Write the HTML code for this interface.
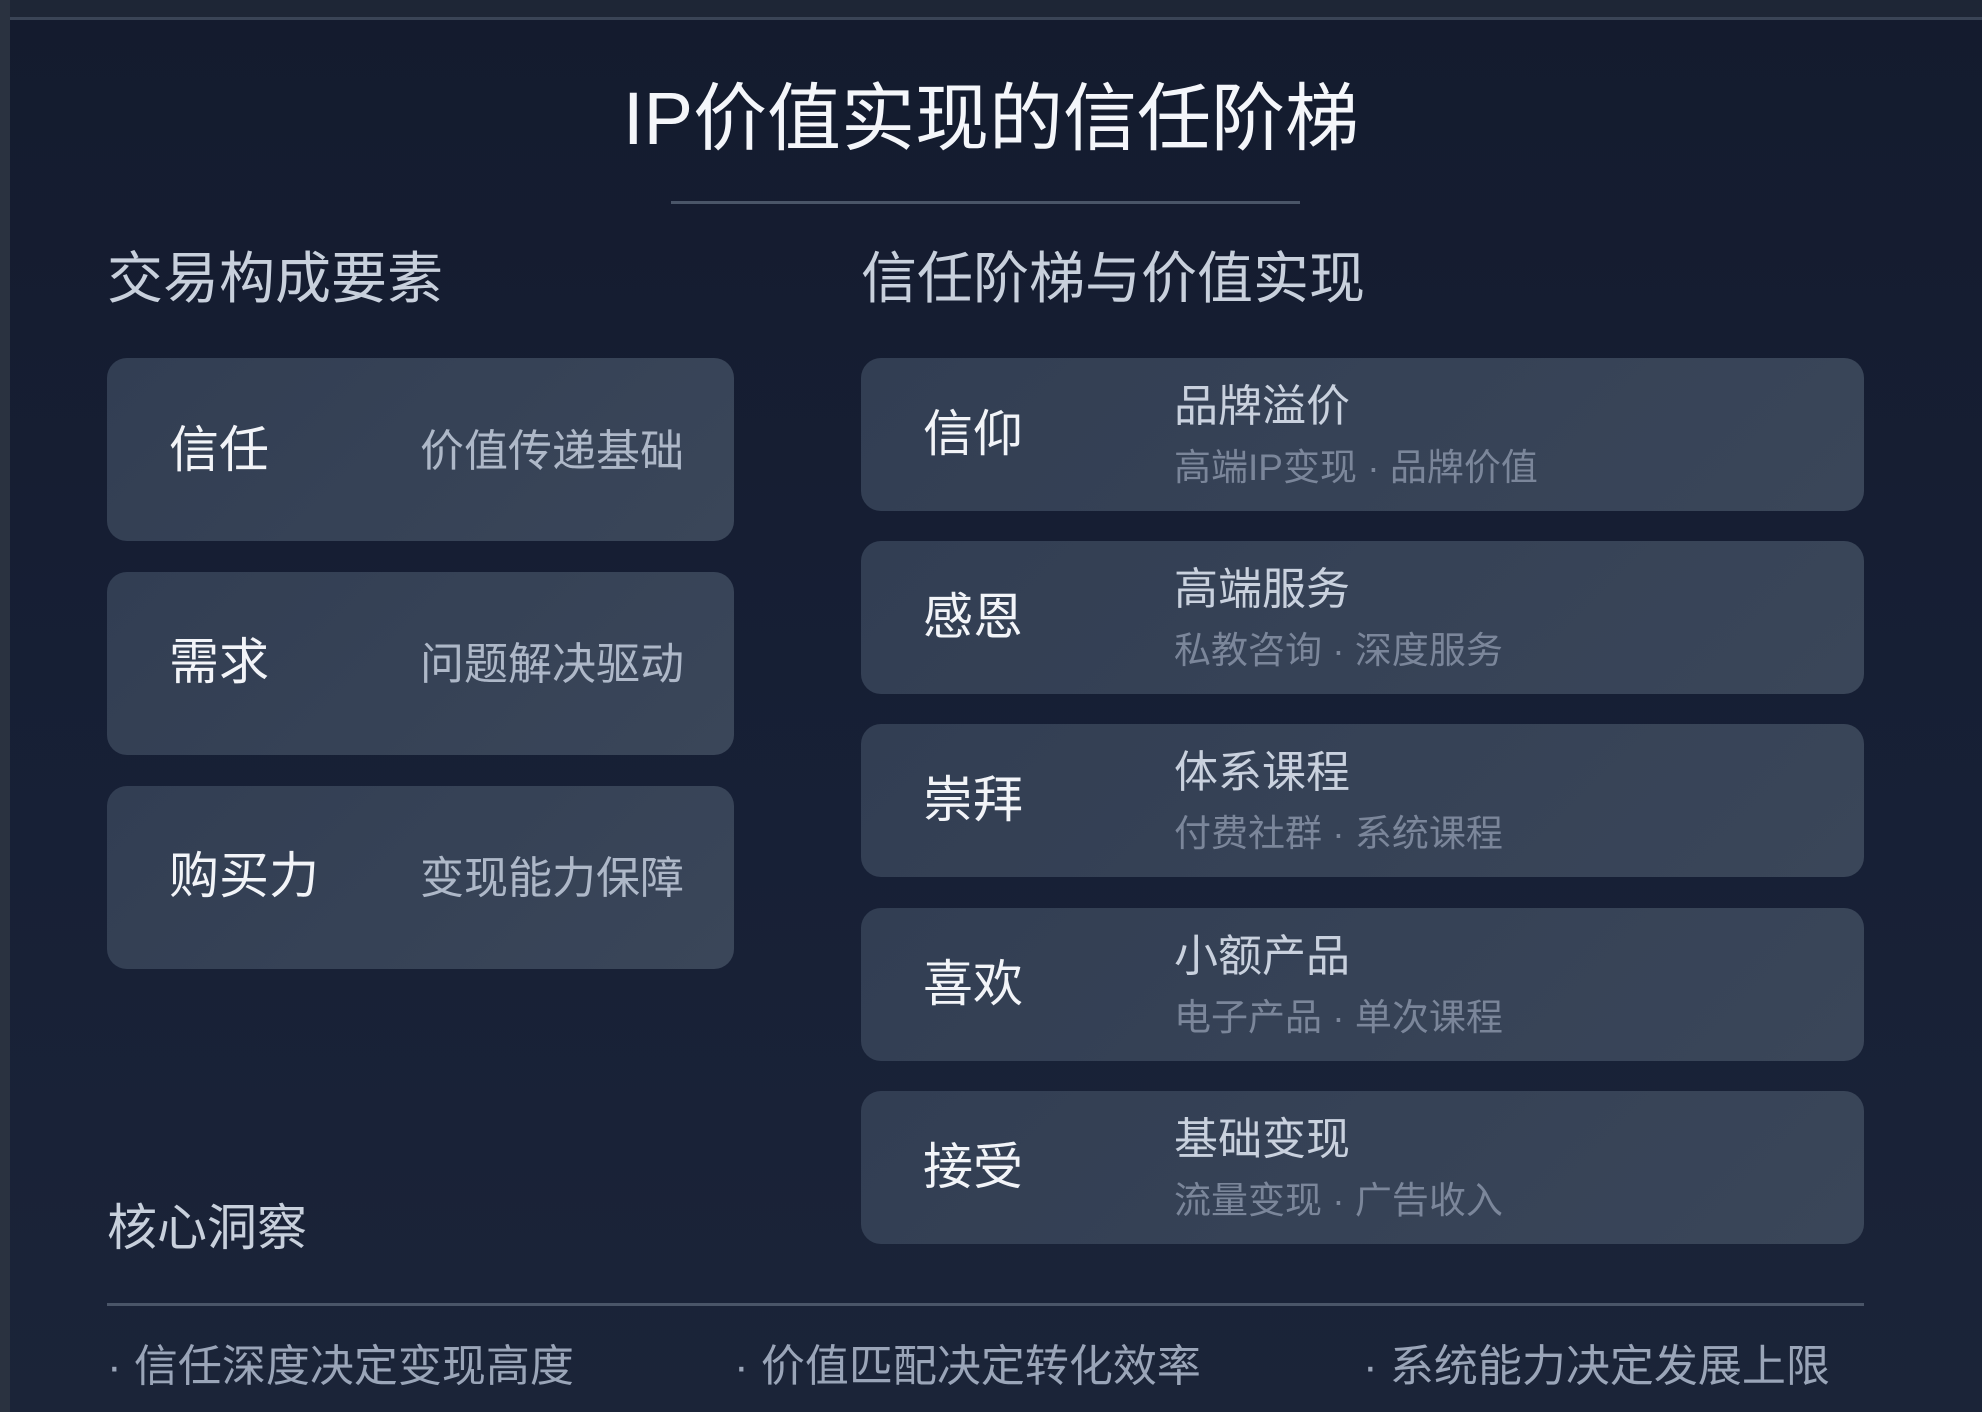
<!DOCTYPE html>
<html><head><meta charset="utf-8"><style>
*{margin:0;padding:0;box-sizing:border-box}
body{width:1982px;height:1412px;overflow:hidden;background:linear-gradient(180deg,#141b2e 0%,#172036 60%,#1b2438 100%);font-family:"Liberation Sans","Noto Sans CJK SC",sans-serif;position:relative}
.abs{position:absolute;white-space:nowrap}
.topbar{position:absolute;left:0;top:0;width:1982px;height:20px;background:#1e2636;border-bottom:3px solid #3a4456}
.leftbar{position:absolute;left:0;top:0;width:10px;height:1412px;background:#2a3240}
.card{position:absolute;border-radius:20px;background:linear-gradient(135deg,#323e53,#3a4659)}
.lab{position:absolute;color:#f2f4f8;font-size:50px;line-height:1}
.rt{position:absolute;color:#aeb8c8;font-size:44px;line-height:1;right:50px}
.t1{position:absolute;left:313px;top:27px;color:#c9d1de;font-size:44px;line-height:1}
.t2{position:absolute;left:313px;top:91px;color:#7b869a;font-size:37px;line-height:1}
</style></head><body>
<div class="topbar"></div><div class="leftbar"></div>
<div class="abs" style="left:0;width:1982px;text-align:center;top:82px;font-size:74px;color:#f4f6fa;line-height:1;padding-left:0">IP价值实现的信任阶梯</div>
<div class="abs" style="left:671px;top:201px;width:629px;height:3px;background:#4a5568"></div>
<div class="abs" style="left:107px;top:251px;font-size:56px;color:#c8d0dc;line-height:1">交易构成要素</div>
<div class="abs" style="left:861px;top:251px;font-size:56px;color:#c8d0dc;line-height:1">信任阶梯与价值实现</div>

<div class="card" style="left:107px;top:358px;width:627px;height:183px"><div class="lab" style="left:62px;top:67px">信任</div><div class="rt" style="top:72px">价值传递基础</div></div>
<div class="card" style="left:107px;top:572px;width:627px;height:183px"><div class="lab" style="left:62px;top:65px">需求</div><div class="rt" style="top:71px">问题解决驱动</div></div>
<div class="card" style="left:107px;top:786px;width:627px;height:183px"><div class="lab" style="left:62px;top:65px">购买力</div><div class="rt" style="top:71px">变现能力保障</div></div>

<div class="card" style="left:861px;top:358px;width:1003px;height:153px"><div class="lab" style="left:62px;top:51px">信仰</div><div class="t1">品牌溢价</div><div class="t2">高端IP变现 · 品牌价值</div></div>
<div class="card" style="left:861px;top:541px;width:1003px;height:153px"><div class="lab" style="left:62px;top:51px">感恩</div><div class="t1">高端服务</div><div class="t2">私教咨询 · 深度服务</div></div>
<div class="card" style="left:861px;top:724px;width:1003px;height:153px"><div class="lab" style="left:62px;top:51px">崇拜</div><div class="t1">体系课程</div><div class="t2">付费社群 · 系统课程</div></div>
<div class="card" style="left:861px;top:908px;width:1003px;height:153px"><div class="lab" style="left:62px;top:51px">喜欢</div><div class="t1">小额产品</div><div class="t2">电子产品 · 单次课程</div></div>
<div class="card" style="left:861px;top:1091px;width:1003px;height:153px"><div class="lab" style="left:62px;top:51px">接受</div><div class="t1">基础变现</div><div class="t2">流量变现 · 广告收入</div></div>

<div class="abs" style="left:107px;top:1203px;font-size:50px;color:#c8d0dc;line-height:1">核心洞察</div>
<div class="abs" style="left:107px;top:1303px;width:1757px;height:3px;background:#4a5568"></div>
<div class="abs" style="left:107px;top:1345px;font-size:44px;color:#9aa5b8;line-height:1">· 信任深度决定变现高度</div>
<div class="abs" style="left:734px;top:1345px;font-size:44px;color:#9aa5b8;line-height:1">· 价值匹配决定转化效率</div>
<div class="abs" style="left:1363px;top:1345px;font-size:44px;color:#9aa5b8;line-height:1">· 系统能力决定发展上限</div>
</body></html>
